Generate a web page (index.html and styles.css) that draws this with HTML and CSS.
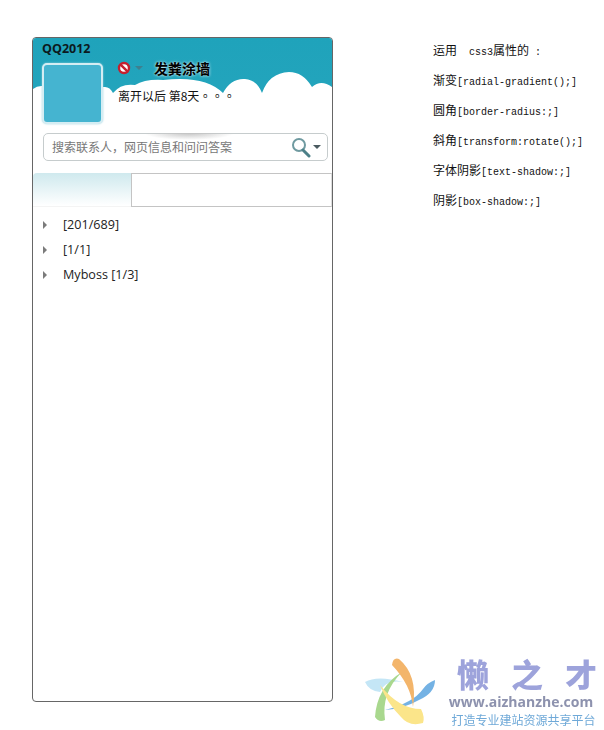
FILE: index.html
```html
<!DOCTYPE html>
<html lang="zh">
<head>
<meta charset="utf-8">
<title>QQ2012</title>
<link rel="stylesheet" href="styles.css">
</head>
<body>
<main class="page">
  <section class="panel">
    <header class="head">
      <svg class="clouds" width="299" height="85" viewBox="0 0 299 85" aria-hidden="true">
        <path class="cloud-fill" d="M0 46Q6 41 14 44L72 44Q77 44 80 50Q88 40 102 42Q112 36 130 37Q172 32 190 50Q198 35 212 36Q224 37 229 50Q236 30 256 29Q270 29 279 44Q288 36 299 44L299 85L0 85Z"/>
      </svg>
      <h1 class="title">QQ2012</h1>
      <div class="profile">
        <div class="avatar"></div>
        <div class="info">
          <div class="status-row">
            <svg class="ban" width="14" height="14" viewBox="0 0 14 14" aria-hidden="true">
              <circle cx="7" cy="7" r="5" fill="#fff" stroke="#c5202e" stroke-width="2.4"/>
              <path d="M3.6 3.6L10.4 10.4" stroke="#c5202e" stroke-width="2.4"/>
            </svg>
            <span class="caret caret-teal"></span>
            <span class="nick">发粪涂墙</span>
          </div>
          <p class="sign">离开以后 第8天<span class="dots" lang="zh-Hant">。。。</span></p>
        </div>
      </div>
    </header>
    <div class="search">
      <span class="placeholder">搜索联系人，网页信息和问问答案</span>
      <svg class="lens" width="20" height="21" viewBox="0 0 20 21" aria-hidden="true">
        <circle cx="8" cy="8" r="6" fill="none" stroke="#6f9aa0" stroke-width="2"/>
        <path d="M12 13L18 19" stroke="#4d8088" stroke-width="3" stroke-linecap="round"/>
      </svg>
      <span class="caret caret-dark"></span>
    </div>
    <div class="tabs">
      <div class="tab tab-active"></div>
      <div class="tab tab-idle"></div>
    </div>
    <ul class="groups">
      <li class="group"><span class="arrow"></span>[201/689]</li>
      <li class="group"><span class="arrow"></span>[1/1]</li>
      <li class="group"><span class="arrow"></span>Myboss [1/3]</li>
    </ul>
  </section>
  <aside class="notes">
    <p class="note"><span class="cjk">运用</span>&nbsp;&nbsp;css3<span class="cjk">属性的</span>&nbsp;:</p>
    <p class="note"><span class="cjk">渐变</span>[radial-gradient();]</p>
    <p class="note"><span class="cjk">圆角</span>[border-radius:;]</p>
    <p class="note"><span class="cjk">斜角</span>[transform:rotate();]</p>
    <p class="note"><span class="cjk">字体阴影</span>[text-shadow:;]</p>
    <p class="note"><span class="cjk">阴影</span>[box-shadow:;]</p>
  </aside>
</main>
<div class="mark">
  <svg class="mark-logo" width="74" height="70" viewBox="0 0 74 70" aria-hidden="true">
    <path d="M2 25Q14 18 40 25Q22 22 17 35Q6 34 2 25Z" fill="#c4e6f6"/>
    <path d="M72 23Q72 36 56 43Q40 52 22 53Q50 46 60 32Q64 26 72 23Z" fill="#74b2e4"/>
    <path d="M39 15Q14 30 12 60Q16 66 22 63Q18 36 39 15Z" fill="#a9d88e"/>
    <path d="M29 8Q30 0 36 2Q55 18 50 50Q48 28 29 8Z" fill="#f3b56b"/>
    <path d="M17 28Q36 52 58 52Q62 60 60 66Q46 70 38 60Q24 46 17 28Z" fill="#fbe58a"/>
  </svg>
  <div class="mark-text">
    <div class="mark-name"><span>懒</span><span>之</span><span>才</span></div>
    <div class="mark-url">www.aizhanzhe.com</div>
    <div class="mark-slogan">打造专业建站资源共享平台</div>
  </div>
</div>
</body>
</html>
```
FILE: styles.css
```css
* { box-sizing: border-box; }
html, body { margin: 0; padding: 0; background: #fff; }
body { width: 604px; height: 730px; overflow: hidden; position: relative; }
.page { display: flex; align-items: flex-start; padding: 37px 0 0 32px; }
.panel {
  width: 301px;
  height: 665px;
  border: 1px solid #666;
  border-radius: 4px;
  background: #fff;
  overflow: hidden;
  flex: none;
}
.head {
  position: relative;
  height: 90px;
  padding: 3px 0 0 9px;
  background: linear-gradient(#1fa3bb, #25a5bd);
}
.clouds { position: absolute; left: 0; top: 5px; }
.cloud-fill { fill: #fff; }
.title {
  position: relative;
  margin: 0;
  font: 700 12.5px/15px "Open Sans", sans-serif;
  color: #0c1a20;
}
.profile { position: relative; display: flex; margin-top: 7px; }
.avatar {
  width: 61px;
  height: 61px;
  border: 2px solid #d5edf3;
  border-radius: 5px;
  background: #45b4d0;
  box-shadow: 0 0 2px #9fd2de;
  flex: none;
}
.info { margin-left: 15px; }
.status-row { display: flex; align-items: center; height: 12px; margin-top: -1px; }
.ban { flex: none; margin-left: -1px; }
.caret { width: 0; height: 0; border-style: solid; border-color: transparent; border-width: 4px 4px 0; flex: none; }
.caret-teal { border-top-color: #3f7f8e; margin-left: 4px; }
.caret-dark { border-top-color: #4a5b60; margin-left: 2px; }
.nick {
  margin-left: 11px;
  font: 700 14px/16px "Noto Sans CJK SC", sans-serif;
  color: #000;
  text-shadow: 0 0 3px #fff;
}
.sign {
  margin: 14px 0 0;
  font: 12px/16px "Noto Sans CJK SC", "Open Sans", sans-serif;
  color: #111;
  text-spacing-trim: space-all;
}
.dots { font-family: "Noto Sans CJK TC", sans-serif; font-feature-settings: "chws" 0, "halt" 0; }
.search {
  position: relative;
  display: flex;
  align-items: center;
  height: 28px;
  margin: 5px 4px 0 10px;
  padding: 0 6px 0 8px;
  border: 1px solid #c6cccd;
  border-radius: 5px;
  background: #fff;
}
.search::before {
  content: "";
  position: absolute;
  left: 100px;
  top: -1px;
  width: 90px;
  height: 7px;
  background: radial-gradient(ellipse 50% 100% at 50% 0, #c4c4c4, rgba(255, 255, 255, 0));
}
.placeholder {
  flex: 1;
  position: relative;
  font: 12px/16px "Noto Sans CJK SC", sans-serif;
  color: #777;
}
.lens { flex: none; }
.tabs { display: flex; height: 34px; margin-top: 12px; }
.tab-active {
  width: 98px;
  flex: none;
  border-radius: 4px 0 0 0;
  background: linear-gradient(#cfe9ee, #fff);
  border-bottom: 1px solid #f4f4f4;
}
.tab-idle {
  flex: 1;
  border: 1px solid #c4c4c4;
  border-right-color: #ddd;
}
.groups { margin: 5px 0 0; padding: 0; list-style: none; }
.group {
  display: flex;
  align-items: center;
  height: 25px;
  padding-left: 10px;
  font: 12.6px/25px "Open Sans", sans-serif;
  color: #222;
}
.arrow {
  width: 0;
  height: 0;
  margin-right: 16px;
  border-style: solid;
  border-color: transparent transparent transparent #7b7b7b;
  border-width: 4px 0 4px 4px;
  flex: none;
}
.notes { margin-left: 100px; padding-top: 4px; }
.note {
  margin: 0 0 13px;
  height: 17px;
  font: 10px/17px "Liberation Mono", monospace;
  color: #111;
  white-space: nowrap;
}
.cjk { font: 12px/17px "Noto Sans CJK SC", sans-serif; }
.mark {
  position: absolute;
  left: 363px;
  top: 655px;
  display: flex;
  filter: blur(0.4px);
}
.mark-logo { flex: none; margin-top: 2px; }
.mark-text { margin-left: 14px; width: 150px; text-align: center; }
.mark-name {
  display: flex;
  justify-content: space-between;
  padding: 0 4px 0 6px;
  font: 900 32px/36px "Noto Sans CJK SC", sans-serif;
  color: #9da3db;
}
.mark-url {
  margin: 2px 0 0 -5px;
  width: 150px;
  font: 700 14px/17px "Open Sans", sans-serif;
  color: #8d92ae;
  white-space: nowrap;
}
.mark-slogan {
  margin: 1px 0 0 -5px;
  font: 12px/17px "Noto Sans CJK SC", sans-serif;
  color: #6fa9d8;
  white-space: nowrap;
}
```
